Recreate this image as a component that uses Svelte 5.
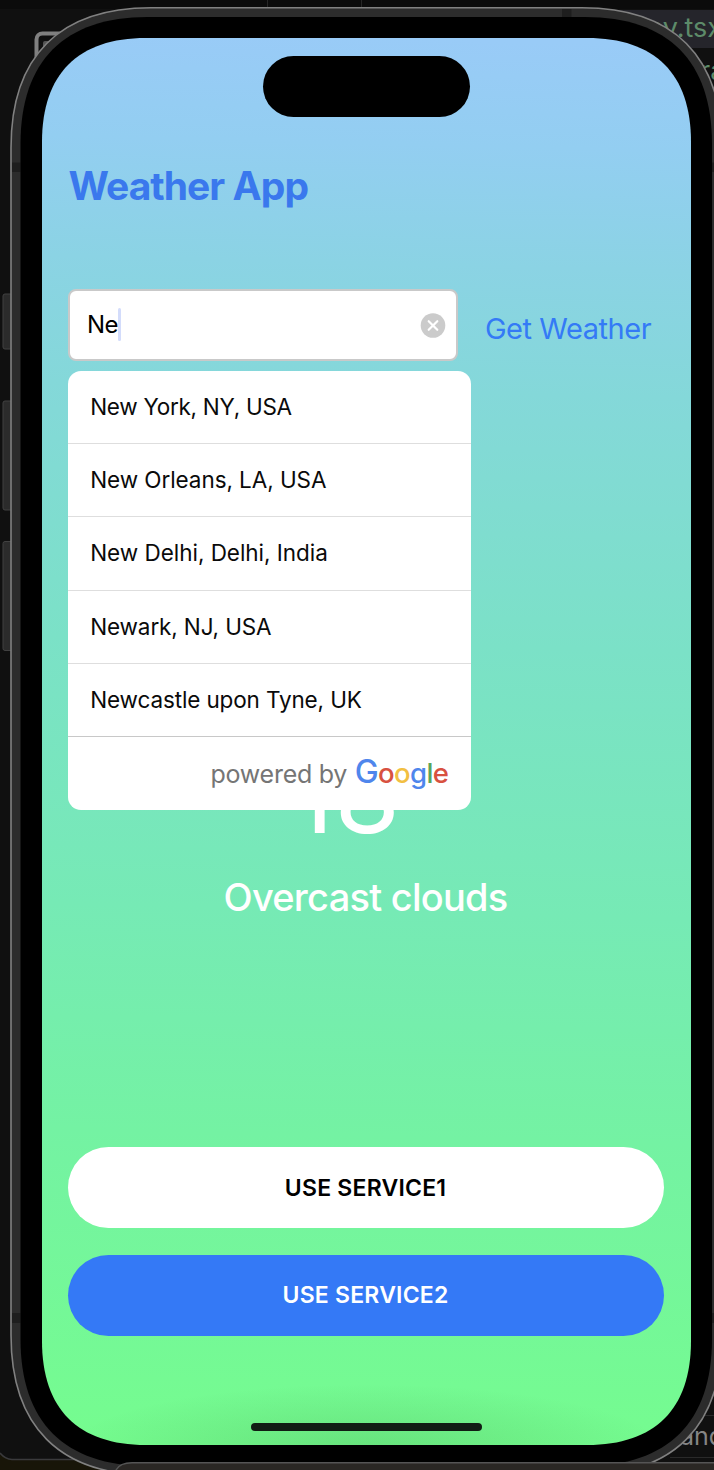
<script>
  let query = $state('Ne');
  const places = [
    'New York, NY, USA',
    'New Orleans, LA, USA',
    'New Delhi, Delhi, India',
    'Newark, NJ, USA',
    'Newcastle upon Tyne, UK'
  ];
  const brand = [
    ['G', '#4f86ec'],
    ['o', '#d85140'],
    ['o', '#f2bf42'],
    ['g', '#4f86ec'],
    ['l', '#58a55c'],
    ['e', '#d85140']
  ];

  // Rectangle with soft, continuous corners: e is how far a corner reaches along each side.
  function smoothRect(l, t, r, b, e) {
    const h = e * 0.346;
    return [
      `M${l + e} ${t}H${r - e}C${r - h} ${t} ${r} ${t + h} ${r} ${t + e}`,
      `V${b - e}C${r} ${b - h} ${r - h} ${b} ${r - e} ${b}`,
      `H${l + e}C${l + h} ${b} ${l} ${b - h} ${l} ${b - e}`,
      `V${t + e}C${l} ${t + h} ${l + h} ${t} ${l + e} ${t}Z`
    ].join('');
  }
  const shell = smoothRect(11, 7.8, 722, 1475, 140);
  const bezel = smoothRect(20.5, 17, 712, 1466, 127);
  const glass = smoothRect(42, 38, 691, 1445, 104);
</script>

<div class="stage">
  <svg class="device" width="714" height="1470" viewBox="0 0 714 1470" aria-hidden="true">
    <defs>
      <linearGradient id="sky" gradientUnits="userSpaceOnUse" x1="378" y1="38" x2="342" y2="1445">
        <stop offset="0" stop-color="#99cbf7" />
        <stop offset=".075" stop-color="#93cef1" />
        <stop offset=".16" stop-color="#8bd3e4" />
        <stop offset=".25" stop-color="#84d8d9" />
        <stop offset=".43" stop-color="#7be1c7" />
        <stop offset=".62" stop-color="#76eab5" />
        <stop offset=".78" stop-color="#74f2a3" />
        <stop offset="1" stop-color="#75fc8f" />
      </linearGradient>
      <radialGradient id="shade" gradientUnits="userSpaceOnUse" cx="366" cy="1450" r="300" gradientTransform="translate(0 1131) scale(1 .22)">
        <stop offset="0" stop-color="#206020" stop-opacity=".17" />
        <stop offset="1" stop-color="#206020" stop-opacity="0" />
      </radialGradient>
    </defs>
    <rect width="714" height="1470" fill="#101010" />
    <rect width="714" height="9" fill="#0b0b0b" />
    <path d="M267.500V8M361.500V8" stroke="#222" />
    <rect x="571" y="10" width="143" height="38" fill="#25252b" />
    <path d="M267.500 0V8M361.500 0V8" stroke="#262626" />
    <rect y="1440" width="120" height="30" fill="#181508" />
    <path d="M0 1400H130V1459.500H12Q5 1459 0 1454Z" fill="#101010" />
    <path d="M0 1453Q5 1459 12 1459.500H130" fill="none" stroke="#3a3a3c" stroke-width="1.500" />
    <path d="M690 1415.500H714M670 1457.500H714" stroke="#2a2a2a" />
    <rect x="36.500" y="33.500" width="30" height="30" rx="6" fill="none" stroke="#808080" stroke-width="4" />
    <rect x="43" y="41" width="14" height="10" rx="2" fill="#555" />
    <text x="648" y="36.500" class="code" fill="#5d8b69">ay.tsx</text>
    <text x="700" y="80" class="code" fill="#5d8b69">ra</text>
    <text x="680" y="1445" class="code small" fill="#858585">and</text>
    <g fill="#2b2b2b" stroke="#414141">
      <rect x="3" y="294" width="14" height="55" rx="2" />
      <rect x="3" y="401" width="14" height="109" rx="2" />
      <rect x="3" y="541.500" width="14" height="109" rx="2" />
    </g>
    <path d={shell} fill="#2c2c2c" stroke="#818181" stroke-width="1.600" />
    <path d="M12 162.500H20.500V172H12ZM12 1313H20.500V1323H12ZM712 162.500H721V172H712ZM712 1313H721V1323H712ZM562 9H571.500V17H562Z" fill="#1e1e1e" />
    <path d={bezel} fill="#000" />
    <path d={glass} fill="url(#sky)" />
    <path d={glass} fill="url(#shade)" />
    <path d="M116 1470Q120 1462.500 132 1462.500H714V1470Z" fill="#2a2724" />
    <path d="M116 1470Q120 1462.800 132 1462.800H714" fill="none" stroke="#555" stroke-width="1.500" />
  </svg>

  <main class="screen">
    <div class="island"></div>
    <h1>Weather App</h1>
    <div class="search">
      <div class="field">
        <span class="query">{query}</span><i class="caret"></i>
        <svg class="clear" width="26" height="26" viewBox="0 0 26 26" role="button" tabindex="-1" aria-label="Clear" onclick={() => (query = '')} onkeydown={() => (query = '')}>
          <circle cx="13" cy="13.500" r="12.300" fill="#cbcbcb" />
          <path d="M8.700 9.200 17.300 17.800M17.300 9.200 8.700 17.800" stroke="#fff" stroke-width="2.200" stroke-linecap="round" />
        </svg>
      </div>
      <span class="get">Get Weather</span>
      <div class="results">
        {#each places as place}
          <div class="row">{place}</div>
        {/each}
        <div class="credit">
          <span class="powered">powered by</span>
          <span class="brand">{#each brand as [ch, color]}<b style:color>{ch}</b>{/each}</span>
        </div>
      </div>
    </div>
    <div class="weather">
      <div class="temp">18°</div>
      <div class="sky">Overcast clouds</div>
    </div>
    <div class="actions">
      <button>USE SERVICE1</button>
      <button class="primary">USE SERVICE2</button>
    </div>
    <div class="home"></div>
  </main>
</div>

<style>
  :global(body) { background: #101010; }
  .stage {
    position: relative;
    width: 714px;
    height: 1470px;
    overflow: hidden;
    font-family: Inter, sans-serif;
  }
  .device { position: absolute; inset: 0; }
  .code { font: 27px Inter, sans-serif; }
  .code.small { font-size: 25px; }
  .screen {
    position: relative;
    box-sizing: border-box;
    width: 649px;
    height: 1407px;
    margin-left: 42px;
    padding: 18.400px 26.800px 0 26.400px;
    top: 38px;
    display: flex;
    flex-direction: column;
  }
  .island {
    flex: none;
    align-self: center;
    width: 207px;
    height: 61px;
    border-radius: 31px;
    background: #000;
  }
  h1 {
    margin: 44.600px 0 0;
    height: 48px;
    font-size: 39px;
    line-height: 48px;
    font-weight: 700;
    color: #3a78ed;
    white-space: nowrap;
    letter-spacing: -0.950px;
  }
  .search {
    position: relative;
    display: flex;
    align-items: center;
    margin-top: 79px;
    height: 72px;
  }
  .field {
    box-sizing: border-box;
    display: flex;
    align-items: center;
    width: 390px;
    height: 72px;
    padding: 0 10.500px 0 16.500px;
    border: 2px solid #c9c9c9;
    border-radius: 8px;
    background: #fff;
    font-size: 24px;
    letter-spacing: -0.500px;
    color: #000;
  }
  .caret {
    width: 3.500px;
    height: 33px;
    border-radius: 2px;
    background: #d3dcfb;
  }
  .clear { margin-left: auto; }
  .get {
    margin: 7px 0 0 26.500px;
    font-size: 29px;
    letter-spacing: -0.450px;
    color: #347af6;
    white-space: nowrap;
  }
  .results {
    position: absolute;
    z-index: 2;
    left: 0;
    top: 82px;
    width: 403px;
    height: 439px;
    border-radius: 13px;
    background: #fff;
    overflow: hidden;
  }
  .row {
    box-sizing: border-box;
    height: 73.250px;
    padding-left: 21.800px;
    border-bottom: 1.200px solid #dedede;
    font-size: 22.500px;
    letter-spacing: -0.130px;
    line-height: 72px;
    color: #0a0a0a;
    white-space: nowrap;
  }
  .row:nth-child(1) { letter-spacing: -0.280px; }
  .row:nth-child(2) { letter-spacing: -0.070px; }
  .row:nth-child(3) { letter-spacing: -0.030px; line-height: 71px; }
  .row:nth-child(5) { border-color: #c8c8c8; }
  .credit {
    display: flex;
    justify-content: flex-end;
    align-items: baseline;
    gap: 7.500px;
    padding-right: 23px;
    line-height: 70px;
  }
  .powered { font-size: 25px; letter-spacing: -0.250px; color: #757575; }
  .brand { font-size: 27.500px; letter-spacing: -0.600px; }
  .brand b { font-weight: 500; }
  .brand b:first-child { font-size: 32px; }
  .weather {
    margin-top: 379.500px;
    text-align: center;
    color: #fff;
  }
  .temp {
    height: 110px;
    line-height: 110px;
    font-size: 106px;
    font-weight: 400;
    letter-spacing: 0.500px;
    padding-left: 6px;
  }
  .sky {
    margin-top: 22.500px;
    height: 48px;
    line-height: 48px;
    font-size: 38px;
    font-weight: 500;
    letter-spacing: -0.750px;
    padding-right: 1.500px;
  }
  .actions {
    display: flex;
    flex-direction: column;
    gap: 26.500px;
    margin-top: 226.500px;
  }
  button {
    height: 81px;
    padding: 0 1.500px 0 0;
    border: 0;
    border-radius: 41px;
    background: #fff;
    color: #000;
    font: 600 23px Inter, sans-serif;
    letter-spacing: 0.220px;
  }
  .primary { background: #3479f6; color: #fff; }
  .home {
    align-self: center;
    width: 231px;
    height: 8px;
    margin-top: 87px;
    border-radius: 4px;
    background: #111d14;
  }
</style>
